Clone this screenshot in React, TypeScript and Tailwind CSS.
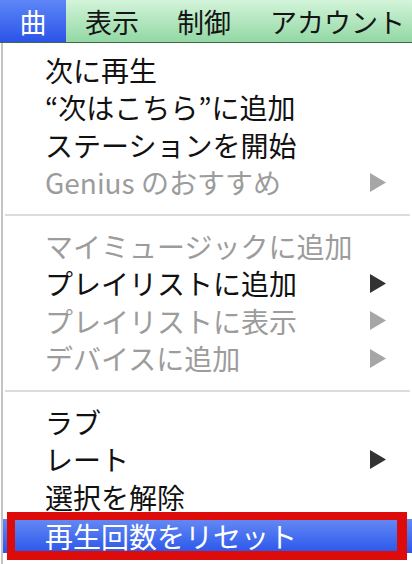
import React from "react";

type Item = { label: string; disabled?: boolean; submenu?: boolean; highlighted?: boolean };

const sections: Item[][] = [
  [
    { label: "次に再生" },
    { label: "“次はこちら”に追加" },
    { label: "ステーションを開始" },
    { label: "Genius のおすすめ", disabled: true, submenu: true },
  ],
  [
    { label: "マイミュージックに追加", disabled: true },
    { label: "プレイリストに追加", submenu: true },
    { label: "プレイリストに表示", disabled: true, submenu: true },
    { label: "デバイスに追加", disabled: true, submenu: true },
  ],
  [
    { label: "ラブ" },
    { label: "レート", submenu: true },
    { label: "選択を解除" },
    { label: "再生回数をリセット", highlighted: true },
  ],
];

function Arrow({ disabled }: { disabled?: boolean }) {
  return (
    <svg width="16" height="19" viewBox="0 0 16 19" className="absolute left-[367px]">
      <polygon points="0,0 16,9.5 0,19" fill={disabled ? "#a6a6a6" : "#333333"} />
    </svg>
  );
}

function Row({ item }: { item: Item }) {
  if (item.highlighted) {
    return (
      <div className="h-[37.5px] flex flex-col justify-end">
        <div className="relative h-[34px] flex items-center pl-[42px] bg-gradient-to-b from-[#6488f4] to-[#2b55ea] text-white">
          <span className="leading-none">{item.label}</span>
        </div>
      </div>
    );
  }
  return (
    <div
      className={`relative h-[37.5px] flex items-center pl-[42px] ${
        item.disabled ? "text-[#9c9c9c]" : "text-[#111111]"
      }`}
    >
      <span className="leading-none">{item.label}</span>
      {item.submenu && <Arrow disabled={item.disabled} />}
    </div>
  );
}

export default function App() {
  return (
    <div className="relative w-[412px] h-[564px] overflow-hidden bg-white font-['Noto_Sans_CJK_JP','Noto_Sans',sans-serif]">
      {/* menu bar */}
      <div className="h-[43px] flex items-stretch bg-gradient-to-b from-[#d3f4da] to-[#92d8a4] border-b border-[#3d6b4a] text-[27px] text-[#151515]">
        <div className="w-[66px] flex items-center justify-center bg-gradient-to-b from-[#5e86f6] to-[#2b52e9] text-white">
          <span className="leading-none">曲</span>
        </div>
        <div className="flex items-center ml-[19px]">
          <span className="leading-none">表示</span>
        </div>
        <div className="flex items-center ml-[38px]">
          <span className="leading-none">制御</span>
        </div>
        <div className="flex items-center ml-[39px]">
          <span className="leading-none">アカウント</span>
        </div>
      </div>

      {/* menu */}
      <div className="h-[521px] ml-[1px] border-l-2 border-[#c4c4c4] pt-[8px] text-[28px]">
        {sections.map((sec, si) => (
          <div key={si}>
            {si > 0 && (
              <div className="h-[26px] pt-[13px] pl-[2px] pr-[2px]">
                <div className="h-[2px] bg-[#dcdcdc]" />
              </div>
            )}
            {sec.map((it) => (
              <Row key={it.label} item={it} />
            ))}
          </div>
        ))}
      </div>

      {/* red annotation box */}
      <div className="absolute left-[7px] top-[512px] w-[400px] h-[48px] border-t-[8px] border-b-[9px] border-l-[8px] border-r-[10px] border-[#de0b0b]" />
    </div>
  );
}
